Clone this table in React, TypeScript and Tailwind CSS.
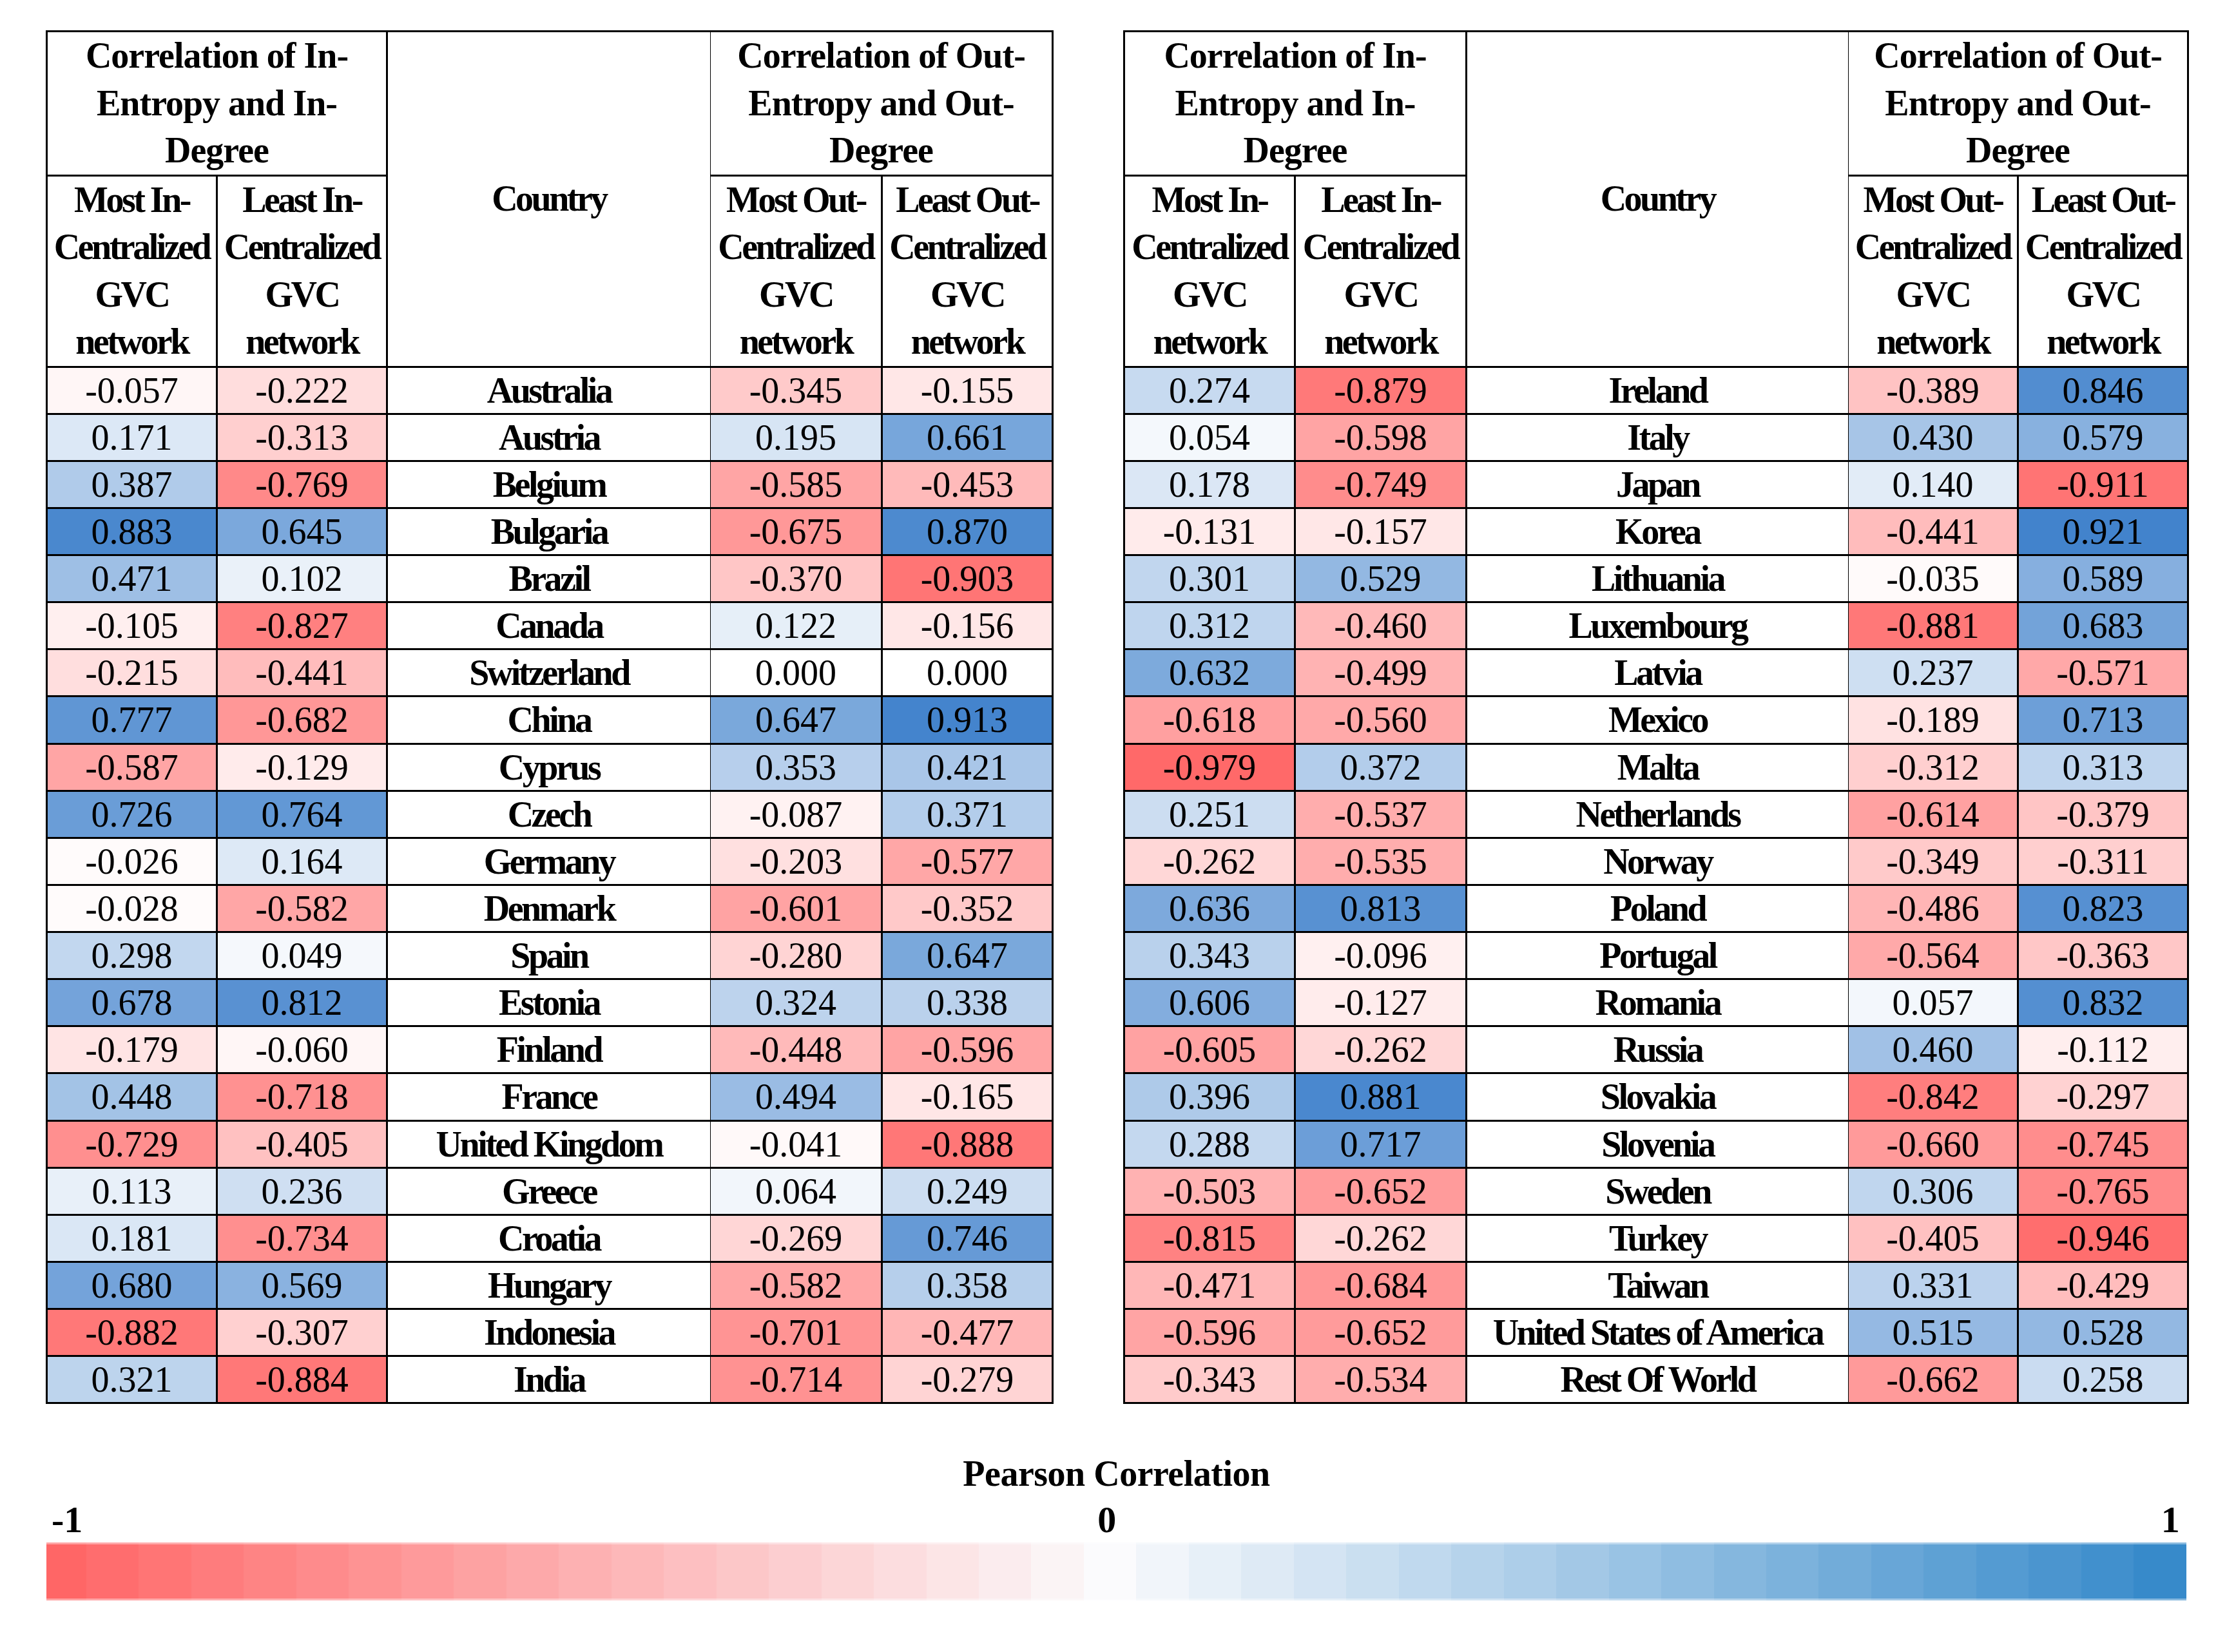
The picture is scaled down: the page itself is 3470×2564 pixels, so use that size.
import React from 'react'

type Row = [string, number, number, number, number]

const LEFT_ROWS: Row[] = [
  ['Australia', -0.057, -0.222, -0.345, -0.155],
  ['Austria', 0.171, -0.313, 0.195, 0.661],
  ['Belgium', 0.387, -0.769, -0.585, -0.453],
  ['Bulgaria', 0.883, 0.645, -0.675, 0.87],
  ['Brazil', 0.471, 0.102, -0.37, -0.903],
  ['Canada', -0.105, -0.827, 0.122, -0.156],
  ['Switzerland', -0.215, -0.441, 0.0, 0.0],
  ['China', 0.777, -0.682, 0.647, 0.913],
  ['Cyprus', -0.587, -0.129, 0.353, 0.421],
  ['Czech', 0.726, 0.764, -0.087, 0.371],
  ['Germany', -0.026, 0.164, -0.203, -0.577],
  ['Denmark', -0.028, -0.582, -0.601, -0.352],
  ['Spain', 0.298, 0.049, -0.28, 0.647],
  ['Estonia', 0.678, 0.812, 0.324, 0.338],
  ['Finland', -0.179, -0.06, -0.448, -0.596],
  ['France', 0.448, -0.718, 0.494, -0.165],
  ['United Kingdom', -0.729, -0.405, -0.041, -0.888],
  ['Greece', 0.113, 0.236, 0.064, 0.249],
  ['Croatia', 0.181, -0.734, -0.269, 0.746],
  ['Hungary', 0.68, 0.569, -0.582, 0.358],
  ['Indonesia', -0.882, -0.307, -0.701, -0.477],
  ['India', 0.321, -0.884, -0.714, -0.279],
]

const RIGHT_ROWS: Row[] = [
  ['Ireland', 0.274, -0.879, -0.389, 0.846],
  ['Italy', 0.054, -0.598, 0.43, 0.579],
  ['Japan', 0.178, -0.749, 0.14, -0.911],
  ['Korea', -0.131, -0.157, -0.441, 0.921],
  ['Lithuania', 0.301, 0.529, -0.035, 0.589],
  ['Luxembourg', 0.312, -0.46, -0.881, 0.683],
  ['Latvia', 0.632, -0.499, 0.237, -0.571],
  ['Mexico', -0.618, -0.56, -0.189, 0.713],
  ['Malta', -0.979, 0.372, -0.312, 0.313],
  ['Netherlands', 0.251, -0.537, -0.614, -0.379],
  ['Norway', -0.262, -0.535, -0.349, -0.311],
  ['Poland', 0.636, 0.813, -0.486, 0.823],
  ['Portugal', 0.343, -0.096, -0.564, -0.363],
  ['Romania', 0.606, -0.127, 0.057, 0.832],
  ['Russia', -0.605, -0.262, 0.46, -0.112],
  ['Slovakia', 0.396, 0.881, -0.842, -0.297],
  ['Slovenia', 0.288, 0.717, -0.66, -0.745],
  ['Sweden', -0.503, -0.652, 0.306, -0.765],
  ['Turkey', -0.815, -0.262, -0.405, -0.946],
  ['Taiwan', -0.471, -0.684, 0.331, -0.429],
  ['United States of America', -0.596, -0.652, 0.515, 0.528],
  ['Rest Of World', -0.343, -0.534, -0.662, 0.258],
]

type RGB = [number, number, number]

// red-white-blue scale, v in [-1, 1]
function corrColor(v: number, blue: RGB = [50, 120, 200], mid: RGB = [255, 255, 255]) {
  const end: RGB = v < 0 ? [255, 102, 102] : blue
  const t = Math.min(1, Math.abs(v))
  const c = mid.map((m, i) => Math.round(m + (end[i] - m) * t))
  return `rgb(${c[0]},${c[1]},${c[2]})`
}

const fmt = (v: number) => v.toFixed(3)

function CorrTable({ rows, side }: { rows: Row[]; side: 'left' | 'right' }) {
  const headCls = 'p-0 border-[3px] border-black font-bold text-[56px] leading-[73.5px] tracking-[-1px] whitespace-nowrap align-middle'
  const subCls = 'p-0 border-[3px] border-black font-bold text-[56px] leading-[73.5px] tracking-[-3.5px] whitespace-nowrap align-middle'
  const numCls = 'p-0 border-[3px] border-black text-[56px] leading-none text-center align-middle'

  return (
    <table className="table-fixed border-collapse border-[3px] border-black">
      <colgroup>
        <col className={side === 'left' ? 'w-[264px]' : 'w-[265px]'} />
        <col className={side === 'left' ? 'w-[264px]' : 'w-[266px]'} />
        <col className={side === 'left' ? 'w-[502px]' : 'w-[593px]'} />
        <col className={side === 'left' ? 'w-[266px]' : 'w-[263px]'} />
        <col className={side === 'left' ? 'w-[265px]' : 'w-[264px]'} />
      </colgroup>
      <thead>
        <tr className="h-[221px]">
          <th colSpan={2} className={headCls}>
            Correlation of In-<br />Entropy and In-<br />Degree
          </th>
          <th rowSpan={2} className={`${subCls} border-r`}>Country</th>
          <th colSpan={2} className={`${headCls} border-l`}>
            Correlation of Out-<br />Entropy and Out-<br />Degree
          </th>
        </tr>
        <tr className="h-[296px]">
          <th className={subCls}>Most In-<br />Centralized<br />GVC<br />network</th>
          <th className={subCls}>Least In-<br />Centralized<br />GVC<br />network</th>
          <th className={`${subCls} border-l`}>Most Out-<br />Centralized<br />GVC<br />network</th>
          <th className={subCls}>Least Out-<br />Centralized<br />GVC<br />network</th>
        </tr>
      </thead>
      <tbody>
        {rows.map(([country, a, b, c, d]) => (
          <tr key={country} className="h-[73.14px]">
            <td className={numCls} style={{ backgroundColor: corrColor(a) }}>{fmt(a)}</td>
            <td className={numCls} style={{ backgroundColor: corrColor(b) }}>{fmt(b)}</td>
            <td className="p-0 border-[3px] border-r border-black text-[56px] leading-none font-bold tracking-[-3.5px] text-center align-middle whitespace-nowrap">
              {country}
            </td>
            <td className={`${numCls} border-l`} style={{ backgroundColor: corrColor(c) }}>{fmt(c)}</td>
            <td className={numCls} style={{ backgroundColor: corrColor(d) }}>{fmt(d)}</td>
          </tr>
        ))}
      </tbody>
    </table>
  )
}

const STEPS = Array.from({ length: 41 }, (_, i) => Math.round((-1 + i * 0.05) * 100) / 100)

function Legend() {
  return (
    <div className="w-[3321px] ml-[1px] mt-[80px]">
      <div className="text-center font-bold text-[56px] leading-[56px] tracking-[-0.5px]">Pearson Correlation</div>

      {/* tick labels sit on the same segment grid as the bar */}
      <div className="flex mt-[16px] font-bold text-[58px] leading-[56px]">
        {STEPS.map((v, i) => (
          <div
            key={i}
            className={`${i === 0 ? 'w-[62px] flex-none pl-[8px] text-left' : 'flex-1'} ${i === 20 ? 'text-center' : ''} ${i === 40 ? 'text-right pr-[10px]' : ''} whitespace-nowrap`}
          >
            {i === 0 ? '-1' : i === 20 ? '0' : i === 40 ? '1' : ''}
          </div>
        ))}
      </div>

      <div className="flex h-[90px] mt-[7px]">
        {STEPS.map((v, i) => (
          <div
            key={i}
            className={`${i === 0 ? 'w-[62px] flex-none' : 'flex-1'} border-y-[3px] border-white/40`}
            style={{ backgroundColor: corrColor(v, [55, 138, 202], [251, 251, 253]) }}
          />
        ))}
      </div>
    </div>
  )
}

export default function App() {
  return (
    <div className="w-[3470px] h-[2564px] bg-white text-black pt-[47px] pl-[71px] [font-family:'Liberation_Serif','Times_New_Roman',serif]">
      <div className="flex items-start gap-[108px]">
        <CorrTable rows={LEFT_ROWS} side="left" />
        <CorrTable rows={RIGHT_ROWS} side="right" />
      </div>
      <Legend />
    </div>
  )
}
